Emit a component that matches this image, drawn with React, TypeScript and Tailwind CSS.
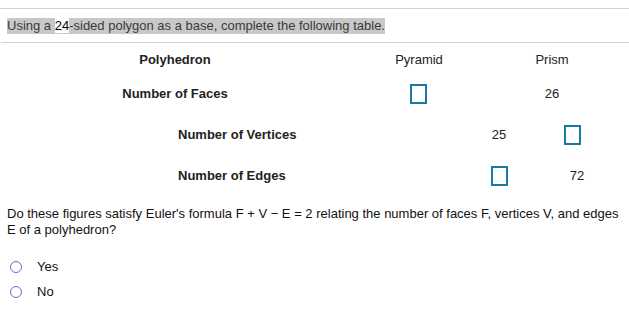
import React from "react";

const font = { fontFamily: '"Liberation Sans", Arial, sans-serif' };

function Box() {
  return <div className="w-[17px] h-[20px] border-2 border-[#167b9c] bg-white" />;
}

function Radio({ label }: { label: string }) {
  return (
    <div className="flex items-center h-[25px]">
      <div className="ml-[10px] w-[12px] h-[12px] rounded-full border-[1.5px] border-[#5c6fd6]" />
      <span className="ml-[15px] text-[13px] text-[#111]">{label}</span>
    </div>
  );
}

export default function App() {
  return (
    <div className="w-[629px] h-[315px] bg-white text-[#222] relative overflow-hidden" style={font}>
      <div className="h-[8px]" />
      <div className="h-px bg-[#ccd2e0]" />
      <div className="pl-[7px] pt-[9px] h-[33px]">
        <span className="text-[13px] leading-[16px] bg-[#c8c8c8] text-[#3a3a3a] inline-block align-top">
          Using a <span className="bg-white text-black">24</span>-sided polygon as a base, complete the following table.
        </span>
      </div>
      <div className="h-px bg-[#ccd2e0] ml-px" />

      {/* Table */}
      <div className="flex flex-col text-[13px]">
        <div className="flex items-center h-[33px]">
          <div className="w-[350px] text-center font-bold">Polyhedron</div>
          <div className="w-[138px] text-center text-[#222]">Pyramid</div>
          <div className="w-[128px] text-center text-[#222]">Prism</div>
        </div>
        <div className="flex items-center h-[36px]">
          <div className="w-[350px] text-center font-bold">Number of Faces</div>
          <div className="w-[136px] flex justify-center"><Box /></div>
          <div className="w-[132px] text-center">26</div>
        </div>
        <div className="flex items-center h-[46px]">
          <div className="w-[178px]" />
          <div className="w-[280px] text-left font-bold">Number of Vertices</div>
          <div className="w-[82px] text-center">25</div>
          <div className="w-[64px] flex justify-center"><Box /></div>
        </div>
        <div className="flex items-center h-[36px]">
          <div className="w-[178px]" />
          <div className="w-[280px] text-left font-bold">Number of Edges</div>
          <div className="w-[82px] flex justify-center"><Box /></div>
          <div className="w-[74px] text-center">72</div>
        </div>
      </div>

      <div className="pl-[7px] w-[627px] pt-[12px] text-[13px] leading-[16px] text-[#111]">
        Do these figures satisfy Euler's formula F + V − E = 2 relating the number of faces F, vertices V, and edges E of a polyhedron?
      </div>

      <div className="mt-[16px]">
        <Radio label="Yes" />
        <Radio label="No" />
      </div>
    </div>
  );
}
